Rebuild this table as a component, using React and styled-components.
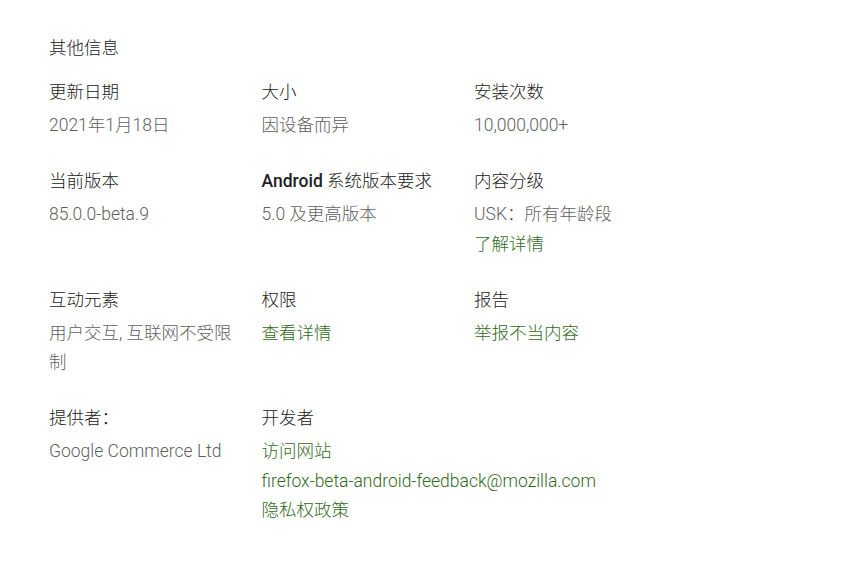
import styled, { createGlobalStyle } from "styled-components";

const GlobalStyle = createGlobalStyle`
  body {
    margin: 0;
    background: #fff;
    font-family: Roboto, "Noto Sans CJK SC", sans-serif;
  }
`;

const sections = [
  { label: "更新日期", lines: [{ text: "2021年1月18日" }] },
  { label: "大小", lines: [{ text: "因设备而异" }] },
  { label: "安装次数", lines: [{ text: "10,000,000+" }] },
  { label: "当前版本", lines: [{ text: "85.0.0-beta.9" }] },
  {
    label: (
      <>
        <Strong>Android</Strong> 系统版本要求
      </>
    ),
    lines: [{ text: "5.0 及更高版本" }],
  },
  {
    label: "内容分级",
    lines: [{ text: "USK：所有年龄段" }, { text: "了解详情", link: true }],
  },
  { label: "互动元素", lines: [{ text: "用户交互, 互联网不受限制" }] },
  { label: "权限", lines: [{ text: "查看详情", link: true }] },
  { label: "报告", lines: [{ text: "举报不当内容", link: true }] },
  { label: "提供者：", lines: [{ text: "Google Commerce Ltd" }] },
  {
    label: "开发者",
    lines: [
      { text: "访问网站", link: true },
      { text: "firefox-beta-android-feedback@mozilla.com", link: true },
      { text: "隐私权政策", link: true },
    ],
  },
];

export default function App() {
  return (
    <>
      <GlobalStyle />
      <Page>
        <Heading>其他信息</Heading>
        <Grid>
          {sections.map((s, i) => (
            <Cell key={i}>
              <Label>{s.label}</Label>
              {s.lines.map((l, j) =>
                l.link ? (
                  <LinkLine key={j} href="#">
                    {l.text}
                  </LinkLine>
                ) : (
                  <Value key={j}>{l.text}</Value>
                )
              )}
            </Cell>
          ))}
        </Grid>
      </Page>
    </>
  );
}

function Strong({ children }) {
  return <AndroidWord>{children}</AndroidWord>;
}

const Page = styled.div`
  padding: 36px 0 0 49px;
  width: 638px;
`;

const Heading = styled.h2`
  margin: 0 0 20px;
  font-size: 17.5px;
  line-height: 24px;
  font-weight: 300;
  color: #212121;
`;

const Grid = styled.div`
  display: grid;
  grid-template-columns: repeat(3, 212.5px);
`;

const Cell = styled.div`
  padding-right: 20px;
  margin-bottom: 28.5px;
`;

const Label = styled.div`
  font-size: 17.5px;
  line-height: 24px;
  font-weight: 300;
  color: #212121;
  margin-bottom: 7px;
`;

const AndroidWord = styled.span`
  font-weight: 500;
`;

const Value = styled.div`
  font-size: 17.5px;
  font-weight: 300;
  line-height: 29.5px;
  color: #616161;
`;

const LinkLine = styled.a`
  display: block;
  font-size: 17.5px;
  font-weight: 300;
  line-height: 29.5px;
  color: #33691e;
  text-decoration: none;
  white-space: nowrap;
`;
